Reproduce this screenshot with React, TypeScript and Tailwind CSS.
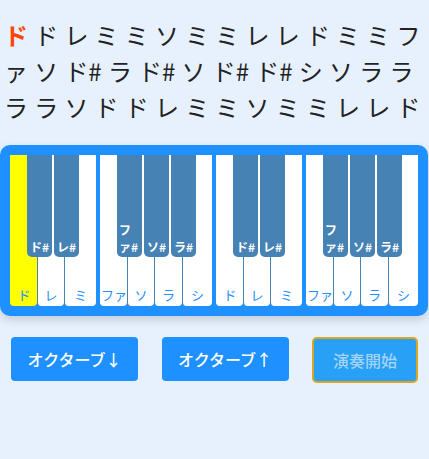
const notes = [
    'ド', 'ド', 'レ', 'ミ', 'ミ', 'ソ', 'ミ', 'ミ', 'レ', 'レ', 'ド', 'ミ', 'ミ', 'ファ',
    'ソ', 'ド#', 'ラ', 'ド#', 'ソ', 'ド#', 'ド#', 'シ', 'ソ', 'ラ', 'ラ',
    'ラ', 'ラ', 'ソ', 'ド', 'ド', 'レ', 'ミ', 'ミ', 'ソ', 'ミ', 'ミ', 'レ', 'レ', 'ド',
];

type WhiteKey = { name: string; width: string; black?: string };

const octave: WhiteKey[][] = [
    [
        { name: 'ド', width: 'w-[27px]', black: 'ド#' },
        { name: 'レ', width: 'w-[27px]', black: 'レ#' },
        { name: 'ミ', width: 'w-[32px]' },
    ],
    [
        { name: 'ファ', width: 'w-[27px]', black: 'ファ#' },
        { name: 'ソ', width: 'w-[27px]', black: 'ソ#' },
        { name: 'ラ', width: 'w-[28px]', black: 'ラ#' },
        { name: 'シ', width: 'w-[30px]' },
    ],
];

const groups = [...octave, ...octave];

function PianoKey({ keyDef, first, active }: { keyDef: WhiteKey; first: boolean; active: boolean }) {
    const bg = active ? 'bg-[#ffff00]' : 'bg-white';
    const border = first ? (active ? 'border-[#ffff00]' : 'border-white') : 'border-[#4682b4]';
    return (
        <div
            className={`relative flex h-[151px] ${keyDef.width} shrink-0 items-end justify-center rounded-b-[4px] border-l ${border} ${bg}`}
        >
            <span className="pb-[2px] text-[13px] leading-[18px] text-[#1e90ff]">{keyDef.name}</span>
            {keyDef.black ? (
                <div className="absolute top-0 left-[16px] z-10 flex h-[102px] w-[25px] flex-col items-center justify-end rounded-b-[5px] bg-[#4682b4] px-[2px] pb-[2px]">
                    <span className="text-[12px] leading-[17px] font-bold text-white">{keyDef.black}</span>
                </div>
            ) : null}
        </div>
    );
}

export default function App() {
    return (
        <div
            className="min-h-screen bg-[#e6f1fd] text-[#222]"
            style={{ fontFamily: '"Noto Sans CJK JP", "Noto Sans", sans-serif' }}
        >
            <p className="pt-[17px] pl-[4px] text-[24px] leading-[36px]">
                {notes.map((note, i) => (
                    <span key={i} className={i === 0 ? 'mr-[6.2px] font-bold text-[#ff4500]' : 'mr-[6.2px]'}>
                        {note}
                    </span>
                ))}
            </p>

            <div className="mt-[20px] flex w-fit gap-[4px] rounded-[10px] bg-[#1e90ff] p-[10px] shadow-[0_4px_10px_rgba(0,0,0,0.15)]">
                {groups.map((group, gi) => (
                    <div key={gi} className="flex">
                        {group.map((k, ki) => (
                            <PianoKey key={k.name} keyDef={k} first={ki === 0} active={gi === 0 && ki === 0} />
                        ))}
                    </div>
                ))}
            </div>

            <div className="mt-[21px] flex justify-between px-[11px]">
                <button className="h-[44px] w-[127px] rounded-[4px] bg-[#1e90ff] text-[16px] font-medium text-white">
                    オクターブ↓
                </button>
                <button className="h-[44px] w-[127px] rounded-[4px] bg-[#1e90ff] text-[16px] font-medium text-white">
                    オクターブ↑
                </button>
                <button className="h-[46px] w-[106px] rounded-[5px] border-2 border-[#daa520] bg-[#27a0f6] text-[16px] font-medium text-[#a5d4f8]">
                    演奏開始
                </button>
            </div>
        </div>
    );
}
